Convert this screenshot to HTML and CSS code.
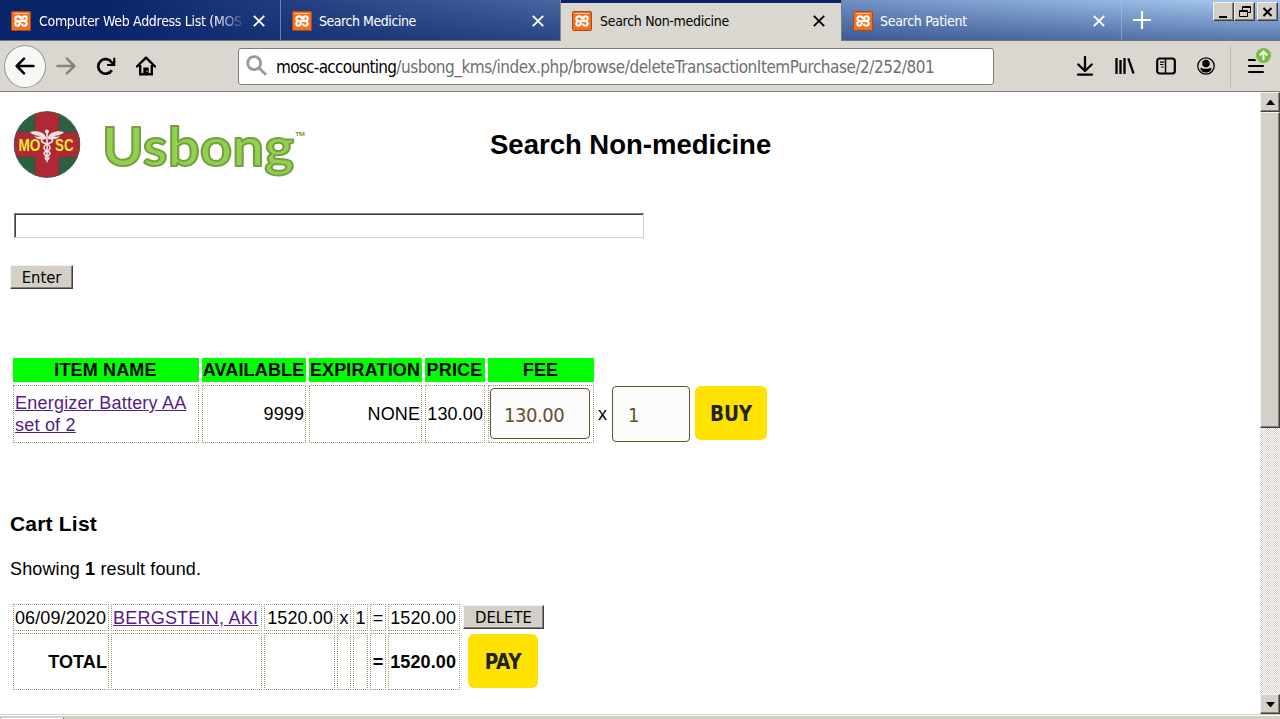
FILE: index.html
```html
<!DOCTYPE html>
<html lang="en">
<head>
<meta charset="utf-8">
<title>Search Non-medicine</title>
<link rel="stylesheet" href="styles.css">
</head>
<body>
<svg class="defs" width="0" height="0">
  <symbol id="xampp" viewBox="0 0 20 20">
    <rect x=".5" y=".5" width="19" height="19" rx="1" fill="#f4701c" stroke="#b04a12"/>
    <path d="M3 2.500h14" stroke="#ffc08a" stroke-width="1"/>
    <path d="M10 8.200C10 4.500 4.300 4.500 4.300 7.500C4.300 9 5.500 9.800 7 10C5.500 10.200 4.300 11 4.300 12.500C4.300 15.500 8.500 15.500 8.500 12.500V11L11.500 9V7.500C11.500 4.500 15.700 4.500 15.700 7.500C15.700 9 14.500 9.800 13 10C14.500 10.200 15.700 11 15.700 12.500C15.700 15.500 11 15.500 11 12.500M7 10h6" fill="none" stroke="#fff" stroke-width="2.100"/>
  </symbol>
  <symbol id="close" viewBox="0 0 12 12"><path d="M.8.800l10.400 10.400M11.200.800L.8 11.200" stroke="currentColor" stroke-width="1.900"/></symbol>
</svg>

<header class="tabs">
  <div class="tab first"><svg class="fav"><use href="#xampp"/></svg><span class="label fade">Computer Web Address List (MOS</span><svg class="x"><use href="#close"/></svg></div>
  <div class="tab second"><svg class="fav"><use href="#xampp"/></svg><span class="label">Search Medicine</span><svg class="x"><use href="#close"/></svg></div>
  <div class="tab active"><svg class="fav"><use href="#xampp"/></svg><span class="label">Search Non-medicine</span><svg class="x"><use href="#close"/></svg></div>
  <div class="tab fourth"><svg class="fav"><use href="#xampp"/></svg><span class="label">Search Patient</span><svg class="x"><use href="#close"/></svg></div>
  <svg class="plus" viewBox="0 0 18 18"><path d="M9 0v18M0 9h18" stroke="#fff" stroke-width="2.200"/></svg>
  <div class="winbtns">
    <span class="raised wb"><svg width="18" height="16"><path d="M4 13h8" stroke="#000" stroke-width="2"/></svg></span>
    <span class="raised wb"><svg width="18" height="16" fill="none" stroke="#000"><path d="M6.500 6v-3.500h8v6h-2.500M6.500 3.500h8"/><path d="M3.500 6.500h8v6h-8zM3.500 7.500h8"/></svg></span>
    <span class="raised wb last"><svg width="18" height="16"><path d="M4.500 4l8 8M12.500 4l-8 8" stroke="#000" stroke-width="2"/></svg></span>
  </div>
</header>

<nav class="toolbar">
  <span class="back"><svg width="20" height="18" viewBox="0 0 20 18" fill="none" stroke="#000" stroke-width="2.500" stroke-linecap="round" stroke-linejoin="round"><path d="M18.500 9H2M9 1.700L1.700 9L9 16.300"/></svg></span>
  <svg class="fwd" width="20" height="18" viewBox="0 0 20 18" fill="none" stroke="#868480" stroke-width="2.500" stroke-linecap="round" stroke-linejoin="round"><path d="M1.500 9H18M11 1.700L18.300 9L11 16.300"/></svg>
  <svg class="reload" width="20" height="19" viewBox="0 0 20 19" fill="none" stroke="#000" stroke-width="2.700"><path d="M15.800 13.200A7.300 7.300 0 1 1 15.700 5.500"/><path d="M18.300.800v7.200h-7.200" stroke-width="2"/><path d="M18.500 3v5h-5z" fill="#000" stroke="none"/></svg>
  <svg class="home" width="20" height="20" viewBox="0 0 20 20" fill="none" stroke="#000" stroke-width="2.400"><path d="M1 10.500L10 1.700l9 8.800" stroke-linecap="round" stroke-linejoin="round"/><path d="M4.200 9v9.300h11.600V9"/><path d="M7.300 18v-6.500h5.400V18" fill="#000" stroke="none"/><path d="M11 14.500v1.500" stroke="#dad7d0" stroke-width="1"/></svg>
  <div class="url">
    <svg width="22" height="22" viewBox="0 0 22 22" fill="none" stroke="#989898" stroke-width="2.800"><circle cx="8.200" cy="8.200" r="6.500"/><path d="M13 13l7 6.800"/></svg>
    <span class="addr"><b>mosc-accounting</b>/usbong_kms/index.php/browse/deleteTransactionItemPurchase/2/252/801</span>
  </div>
  <div class="tools">
    <svg width="18" height="20" viewBox="0 0 18 20" fill="none" stroke="#000" stroke-width="2.300"><path d="M9 1v13.500M2.300 8.500L9 15l6.700-6.500M2 18.700h14" stroke-linecap="round" stroke-linejoin="round"/></svg>
    <svg width="20" height="18" viewBox="0 0 20 18" stroke="#000" stroke-width="2.300"><path d="M1.500 1v16M5.500 3v14M9.500 1v16M13.300 1.300l5.200 15.200"/></svg>
    <svg width="20" height="18" viewBox="0 0 20 18" fill="none" stroke="#000"><rect x="1.200" y="1.500" width="17.600" height="15" rx="2.500" stroke-width="2.200"/><path d="M9.500 2v14" stroke-width="1.500"/><path d="M4 5.200h4M4 7.500h3.500M5 10h2.500" stroke-width="1.200"/></svg>
    <svg width="18" height="18" viewBox="0 0 18 18"><circle cx="9" cy="9" r="8.200" fill="none" stroke="#000" stroke-width="1.300"/><circle cx="9" cy="6.500" r="3.800"/><path d="M3.500 10.500c2 1.800 9 1.800 11 0c.5 3-2.500 5-5.500 5s-6-2-5.500-5z"/></svg>
  </div>
  <div class="menu"><svg width="28" height="34" viewBox="0 0 28 34"><path d="M4 15h14M4 21h14M4 27h14" stroke="#000" stroke-width="2.200" stroke-linecap="round"/><circle cx="18" cy="11" r="8.500" fill="#dad7d0"/><circle cx="18.500" cy="10.500" r="7.500" fill="#74bf43"/><path d="M18.500 15V7M14.700 10.200l3.800-3.700 3.800 3.700" fill="none" stroke="#fff" stroke-width="1.900"/></svg></div>
</nav>

<div class="view">
<main class="page">
  <div class="brand">
    <svg class="logos" width="310" height="90" viewBox="0 0 310 90">
      <defs><clipPath id="disc"><circle cx="47" cy="44.500" r="33"/></clipPath></defs>
      <g clip-path="url(#disc)"><rect x="10" y="10" width="80" height="80" fill="#2b6043"/><path d="M35 0h24v90H35zM10 32h75v25H10z" fill="#b02836"/><path d="M35 11v21H13M59 11v21h22M35 78V57H13M59 78V57h22" fill="none" stroke="#54423c" stroke-width=".6"/></g>
      <circle cx="47" cy="44.500" r="32.800" fill="none" stroke="#45604c" stroke-width=".8"/>
      <g fill="#ece4df"><path d="M46 37c-2-5-10-7-16-5c2 3 8 4 11 4c-3 1-5 1-7 0c3 4 8 4 12 3zM48 37c2-5 10-7 16-5c-2 3-8 4-11 4c3 1 5 1 7 0c-3 4-8 4-12 3z"/><circle cx="47" cy="31.500" r="2"/><path d="M46.200 32h1.600v29l-.8 2l-.8-2z"/></g>
      <path d="M43 38c-4 4 1 5 4 6s5 5 0 7s-3 4 0 5s2 3 0 4M51 38c4 4-1 5-4 6s-5 5 0 7s3 4 0 5s-2 3 0 4" fill="none" stroke="#ece4df" stroke-width="1.500"/>
      <g class="mosc"><text x="18.500" y="50.500" textLength="22" lengthAdjust="spacingAndGlyphs">MO</text><text x="55" y="50.500" textLength="18.500" lengthAdjust="spacingAndGlyphs">SC</text></g>
      <text class="usbong" x="102" y="66" textLength="192" lengthAdjust="spacingAndGlyphs">Usbong</text>
      <text class="tm" x="295" y="41" textLength="11" lengthAdjust="spacingAndGlyphs">™</text>
    </svg>
    <h1>Search Non-medicine</h1>
  </div>
  <div class="query"></div>
  <button class="raised classic enter">Enter</button>

  <section class="results">
    <div class="items">
      <div class="th">ITEM NAME</div><div class="th">AVAILABLE</div><div class="th">EXPIRATION</div><div class="th">PRICE</div><div class="th">FEE</div>
      <div class="td"><a class="item">Energizer Battery AA<br>set of 2</a></div><div class="td r">9999</div><div class="td r">NONE</div><div class="td r">130.00</div><div class="td fee"><span class="box">130.00</span></div>
    </div>
    <div class="order"><span class="times">x</span><span class="box qty">1</span><button class="yellow">BUY</button></div>
  </section>

  <h2>Cart List</h2>
  <p>Showing <strong>1</strong> result found.</p>

  <section class="cartrow">
    <div class="cart">
      <div class="td date">06/09/2020</div><div class="td"><a class="item">BERGSTEIN, AKI</a></div><div class="td r">1520.00</div><div class="td c">x</div><div class="td c">1</div><div class="td c">=</div><div class="td r sum">1520.00</div>
      <div class="td r bold">TOTAL</div><div class="td"></div><div class="td"></div><div class="td"></div><div class="td"></div><div class="td c bold">=</div><div class="td r sum bold">1520.00</div>
    </div>
    <div class="actions"><button class="raised classic delete">DELETE</button><button class="yellow pay">PAY</button></div>
  </section>
</main>
<aside class="scroll">
  <span class="raised sb"><svg width="9" height="5"><path d="M4 0h1l4 5H0z"/></svg></span>
  <span class="raised thumb"></span>
  <span class="track"></span>
  <span class="raised sb"><svg width="9" height="5"><path d="M0 0h9L5 5H4z"/></svg></span>
</aside>
</div>
<footer class="status"><span></span></footer>
</body>
</html>
```
FILE: styles.css
```css
* { box-sizing: border-box; }
body { margin: 0; width: 1280px; height: 719px; overflow: hidden; display: flex; flex-direction: column; background: #fff; color: #000; font: 18px/22px "Liberation Sans", sans-serif; }
.defs { display: none; }
svg { flex: none; }

.tabs { height: 41px; flex: none; display: flex; border-bottom: 1px solid #76777a; background: linear-gradient(to bottom, rgba(10,36,106,0) 0, rgba(10,36,106,.5) 100%), linear-gradient(to right, #0a246a 0, #0a246a 8%, #a6caf0 97%); font: 14px/18px "DejaVu Sans Condensed", "DejaVu Sans", sans-serif; color: #fff; }
.tab { width: 281px; height: 40px; flex: none; display: flex; align-items: center; padding: 1px 16px 0 11px; border-right: 1px solid rgba(180,200,235,.5); }
.tab.second { width: 280px; border-right-color: #8b8c8e; }
.tab.active { height: 41px; width: 280px; color: #000; background: #dad7d0; border-top: 3px solid #0a246a; padding-top: 0; border-right: 0; padding-bottom: 2px; }
.tab.fourth { width: 281px; border-left: 1px solid #7b7d82; }
.fav { width: 20px; height: 20px; }
.label { margin-left: 8px; flex: 1; white-space: nowrap; overflow: hidden; letter-spacing: -.3px; }
.second .label, .fourth .label { margin-left: 7px; }
.second .label { letter-spacing: -.45px; }
.first .x { margin-right: -1px; }
.fade { -webkit-mask-image: linear-gradient(to right, #000 175px, transparent 208px); mask-image: linear-gradient(to right, #000 175px, transparent 208px); }
.x { width: 12px; height: 12px; }
.plus { width: 18px; height: 18px; margin: 11px 0 0 11px; }
.winbtns { margin: 2px 2px 0 auto; display: flex; height: 19px; }
.raised { background: #d4d0c8; border: 1px solid; border-color: #f4f2ee #404040 #404040 #f4f2ee; box-shadow: inset -1px -1px #808080; display: flex; align-items: center; justify-content: center; }
.wb { width: 21px; }
.wb.last { margin-left: 2px; }

.toolbar { height: 51px; flex: none; display: flex; align-items: center; background: #dad7d0; border-bottom: 1px solid #7d7c79; }
.back { width: 42px; height: 43px; margin-left: 4px; border-radius: 50%; border: 1px solid #9a9894; background: #f7f7f5; display: flex; align-items: center; justify-content: center; }
.fwd { margin-left: 10px; }
.reload { margin-left: 20px; }
.home { margin-left: 20px; }
.url { width: 756px; height: 37px; margin-left: 82px; border: 1px solid #7c7c7a; border-radius: 3px; background: #fff; display: flex; align-items: center; padding-left: 7px; }
.addr { margin-left: 8px; font: 17px/22px "DejaVu Sans Condensed", "DejaVu Sans", sans-serif; color: #6f6f6f; white-space: nowrap; letter-spacing: -.47px; padding-top: 1px; }
.addr b { font-weight: 400; color: #000; letter-spacing: -.7px; }
.tools { display: flex; align-items: center; gap: 21px; margin-left: 82px; }
.menu { margin-left: 15px; height: 42px; width: 50px; border-left: 1px solid #bfbcb5; padding-left: 14px; display: flex; align-items: flex-start; }

.view { height: 622px; flex: none; display: flex; }
.page { flex: 1; padding-left: 10px; }
.brand { display: flex; height: 100px; margin-left: -10px; padding-top: 8px; }
h1 { margin: 30px 0 0 180px; font-size: 27.500px; line-height: 30px; white-space: nowrap; }
.mosc { font: bold 17px "Liberation Sans", sans-serif; fill: #f5ea35; }
.usbong { font: bold 54px Lato, sans-serif; fill: #92d050; stroke: #75a040; stroke-width: 2px; stroke-linejoin: round; }
.tm { font: bold 13px "Liberation Sans", sans-serif; fill: #75a040; }
.query { width: 630px; height: 25px; margin: 21px 0 0 4px; border: 1px solid; border-color: #808080 #d4d0c8 #d4d0c8 #808080; box-shadow: inset 1px 1px #404040; }
button { font-family: inherit; padding: 0; }
.classic { font: 16.500px/20px "DejaVu Sans Condensed", "DejaVu Sans", sans-serif; color: #000; height: 24px; border-radius: 0; padding-top: 2px; }
.enter { width: 63px; margin-top: 27px; letter-spacing: -.1px; }
.results { display: flex; margin-top: 69px; height: 85px; }
.items { display: grid; grid-template-columns: 186px 104px 113px 60px 106px; grid-template-rows: 24px 58px; gap: 3px; margin-left: 3px; }
.th { background: #0f0; font-weight: bold; text-align: center; line-height: 24px; white-space: nowrap; letter-spacing: .15px; text-indent: -1px; }
.td { border: 1px dotted #a39674; padding: 0 1px; display: flex; align-items: center; white-space: nowrap; }
.r { justify-content: flex-end; padding-right: 1px; letter-spacing: .1px; }
.sum { padding-right: 3px; }
.c { justify-content: center; }
.bold { font-weight: bold; }
.date { letter-spacing: .1px; }
a { color: #551a8b; text-decoration: underline; }
.item { letter-spacing: .22px; }
.box { border: 1px solid #65502c; border-radius: 4px; background: #fbfbfb; width: 100px; height: 51px; padding-left: 13px; display: flex; align-items: center; font: 20px "DejaVu Sans Condensed", "DejaVu Sans", sans-serif; letter-spacing: -.45px; color: #65502c; padding-top: 2px; }
.fee .box { margin-top: -1px; }
.order { display: flex; align-items: flex-start; padding: 28px 0 0 4px; }
.times { width: 9px; margin-top: 17px; }
.qty { width: 78px; height: 56px; margin-left: 5px; padding-left: 15px; }
.yellow { background: #ffe200; border: 0; border-radius: 6px; width: 72px; height: 54px; margin-left: 5px; font: bold 20.500px "DejaVu Sans Condensed", "DejaVu Sans", sans-serif; letter-spacing: -.2px; color: #222; padding-top: 2px; }
h2 { font-size: 21px; line-height: 24px; margin: 69px 0 0; letter-spacing: .2px; }
p { margin: 22px 0 0; line-height: 22px; letter-spacing: .13px; }
.cartrow { display: flex; margin: 24px 0 0 3px; }
.cart { display: grid; grid-template-columns: 96px 151px 71px 14px 15px 16px 72px; grid-template-rows: 27px 57px; gap: 2px; }
.actions { margin-left: 3px; }
.delete { width: 81px; margin-top: 1px; letter-spacing: 0; }
.pay { width: 70px; margin: 5px 0 0 5px; }

.scroll { width: 20px; display: flex; flex-direction: column; }
.sb { height: 20px; width: 20px; flex: none; }
.thumb { height: 316px; flex: none; }
.track { flex: 1; background: repeating-conic-gradient(#d4d0c8 0 25%, #fff 0 50%) 0 0 / 2px 2px; }
.status { height: 5px; flex: none; background: #d4d0c8; border-top: 1px solid #d4d0c8; box-shadow: inset 0 1px #fff; display: flex; align-items: flex-end; padding-left: 2px; }
.status span { width: 62px; height: 1px; background: #fff; border-right: 1px solid #404040; }
```
